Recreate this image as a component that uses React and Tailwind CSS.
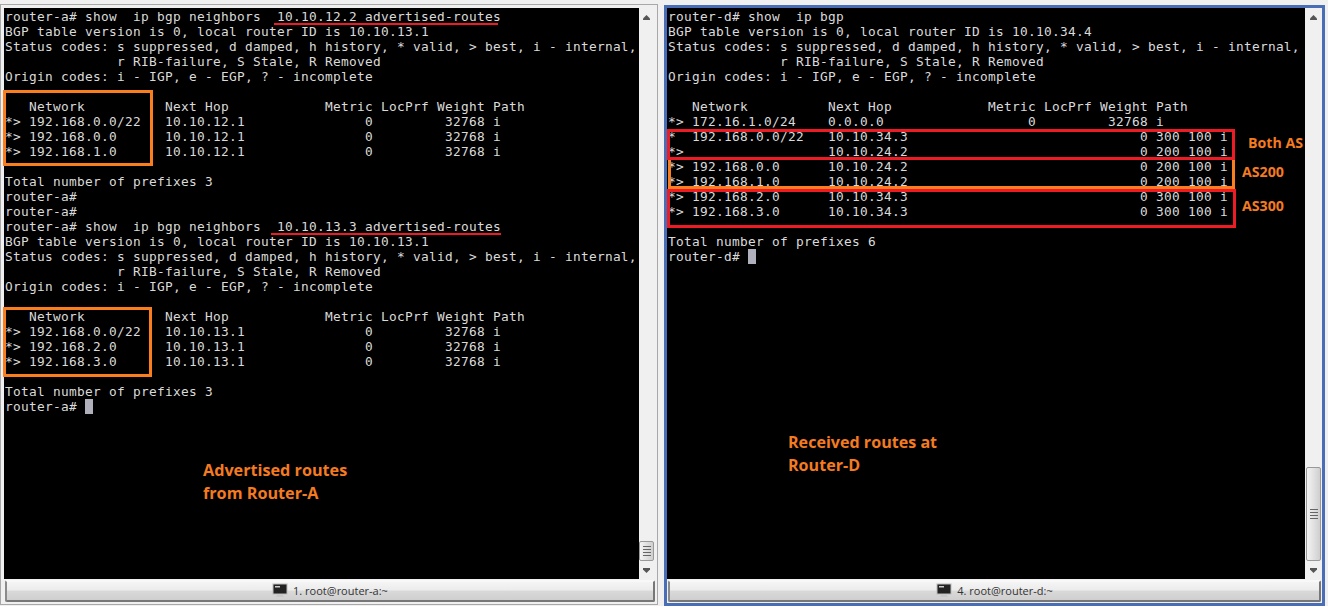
const leftLines = [
  'router-a# show  ip bgp neighbors  10.10.12.2 advertised-routes',
  'BGP table version is 0, local router ID is 10.10.13.1',
  'Status codes: s suppressed, d damped, h history, * valid, > best, i - internal,',
  '              r RIB-failure, S Stale, R Removed',
  'Origin codes: i - IGP, e - EGP, ? - incomplete',
  '',
  '   Network          Next Hop            Metric LocPrf Weight Path',
  '*> 192.168.0.0/22   10.10.12.1               0         32768 i',
  '*> 192.168.0.0      10.10.12.1               0         32768 i',
  '*> 192.168.1.0      10.10.12.1               0         32768 i',
  '',
  'Total number of prefixes 3',
  'router-a#',
  'router-a#',
  'router-a# show  ip bgp neighbors  10.10.13.3 advertised-routes',
  'BGP table version is 0, local router ID is 10.10.13.1',
  'Status codes: s suppressed, d damped, h history, * valid, > best, i - internal,',
  '              r RIB-failure, S Stale, R Removed',
  'Origin codes: i - IGP, e - EGP, ? - incomplete',
  '',
  '   Network          Next Hop            Metric LocPrf Weight Path',
  '*> 192.168.0.0/22   10.10.13.1               0         32768 i',
  '*> 192.168.2.0      10.10.13.1               0         32768 i',
  '*> 192.168.3.0      10.10.13.1               0         32768 i',
  '',
  'Total number of prefixes 3',
]

const rightLines = [
  'router-d# show  ip bgp',
  'BGP table version is 0, local router ID is 10.10.34.4',
  'Status codes: s suppressed, d damped, h history, * valid, > best, i - internal,',
  '              r RIB-failure, S Stale, R Removed',
  'Origin codes: i - IGP, e - EGP, ? - incomplete',
  '',
  '   Network          Next Hop            Metric LocPrf Weight Path',
  '*> 172.16.1.0/24    0.0.0.0                  0         32768 i',
  '*  192.168.0.0/22   10.10.34.3                             0 300 100 i',
  '*>                  10.10.24.2                             0 200 100 i',
  '*> 192.168.0.0      10.10.24.2                             0 200 100 i',
  '*> 192.168.1.0      10.10.24.2                             0 200 100 i',
  '*> 192.168.2.0      10.10.34.3                             0 300 100 i',
  '*> 192.168.3.0      10.10.34.3                             0 300 100 i',
  '',
  'Total number of prefixes 6',
]

function Console({ lines, prompt }) {
  return (
    <pre className="font-['DejaVu_Sans_Mono',monospace] text-[12.800px] tracking-[0.294px] leading-[15px] text-[#dadada] whitespace-pre overflow-hidden">
      {lines.map((line, i) => (
        <div key={i} className="h-[15px]">{line}</div>
      ))}
      <div className="h-[15px] flex">
        {prompt}
        <span className="ml-2 w-2 h-[15px] bg-[#b0b0bc]" />
      </div>
    </pre>
  )
}

function Scrollbar({ thumb, className }) {
  return (
    <div className={`w-[17px] shrink-0 bg-[#f0f0f0] flex flex-col justify-between items-center pt-[7px] pb-1 ${className}`}>
      <svg width="9" height="5" viewBox="0 0 9 5">
        <path d="M4.500 0l3.500 3.500v1.500h-7v-1.500z" fill="#555" />
      </svg>
      <div className="flex flex-col items-center">
        {thumb}
        <svg width="9" height="5" viewBox="0 0 9 5" className="mt-[7px] mb-[2px]">
          <path d="M1 0h7v1.500l-3.500 3.500l-3.500-3.500z" fill="#555" />
        </svg>
      </div>
    </div>
  )
}

function Grip() {
  return (
    <div className="flex flex-col gap-[2px] w-[8px]">
      <div className="h-[1px] bg-[#666]" />
      <div className="h-[1px] bg-[#666]" />
      <div className="h-[1px] bg-[#666]" />
      <div className="h-[1px] bg-[#666]" />
    </div>
  )
}

function TaskButton({ label, className }) {
  return (
    <div className={`h-[22px] mt-[1px] rounded-[2px] border-2 border-t-[#f8f8f8] border-l-[#8a8a8a] border-r-[#777] border-b-[#777] bg-[linear-gradient(#f4f4f4,#ececec_45%,#d9d9d9_50%,#cfcfcf)] flex items-center justify-center gap-[5px] font-['Open_Sans',sans-serif] text-[11px] text-[#333] ${className}`}>
      <svg width="16" height="16" viewBox="0 0 16 16">
        <rect x="1" y="1" width="14" height="10" fill="#222" stroke="#bbb" />
        <rect x="3" y="3" width="5" height="1.500" fill="#ccc" />
        <path d="M5 12h6l1 2h-8z" fill="#c8c8c8" />
      </svg>
      {label}
    </div>
  )
}

function Note({ className, children }) {
  return (
    <div className={`absolute font-['Open_Sans',sans-serif] font-bold text-[#f47b20] ${className}`}>
      {children}
    </div>
  )
}

function Box({ className }) {
  return <div className={`absolute ${className}`} />
}

export default function App() {
  return (
    <div className="w-[1328px] h-[606px] bg-[#f0f0f0] flex overflow-hidden">
      <div className="relative w-[658px] h-[601px] shrink-0 mt-[4px] pl-[3px] pt-[3px] border border-[#a8a8a8] flex flex-col">
        <div className="flex h-[571px]">
          <div className="w-[635px] bg-black pl-[1px] pt-[1px] overflow-hidden">
            <Console lines={leftLines} prompt="router-a#" />
          </div>
          <Scrollbar
            className="pr-[2px]"
            thumb={
              <div className="w-[15px] h-[20px] rounded-[2px] border border-[#999] bg-gradient-to-r from-[#f4f4f4] to-[#cfcfcf] flex items-center justify-center">
                <Grip />
              </div>
            }
          />
        </div>
        <TaskButton label="1. root@router-a:~" className="ml-[1px] mr-[2px]" />

        <Box className="left-[2px] top-[85px] w-[150px] h-[76px] border-[3px] border-[#fa7d1e]" />
        <Box className="left-[2px] top-[302px] w-[149px] h-[70px] border-[3px] border-[#fa7d1e]" />
        <Box className="left-[273px] top-[18px] w-[224px] h-[2px] bg-[#ed1c24]" />
        <Box className="left-[270px] top-[228px] w-[230px] h-[2px] bg-[#ed1c24]" />
        <Note className="left-[202px] top-[454px] text-[16.200px] leading-[23px]">
          Advertised routes<br />from Router-A
        </Note>
      </div>

      <div className="relative w-[661px] h-[601px] shrink-0 mt-[5px] ml-[6px] border-[3px] border-[#4a6eb5] flex flex-col">
        <div className="flex h-[571px]">
          <div className="flex-1 bg-black pl-[1px] pt-[1px] overflow-hidden">
            <Console lines={rightLines} prompt="router-d#" />
          </div>
          <Scrollbar
            thumb={
              <div className="w-[15px] h-[94px] rounded-[2px] border border-[#999] bg-gradient-to-r from-[#f4f4f4] to-[#cfcfcf] flex items-center justify-center">
                <Grip />
              </div>
            }
          />
        </div>
        <TaskButton label="4. root@router-d:~" className="mx-[1px]" />

        <Box className="left-0 top-[121px] w-[568px] h-[31px] border-[3px] border-[#ed1c24]" />
        <Box className="left-[1px] top-[152px] w-[567px] h-[29px] border-x-[3px] border-b-[3px] border-[#fa7d1e]" />
        <Box className="left-0 top-[181px] w-[569px] h-[39px] border-[3px] border-[#ed1c24]" />
        <Note className="left-[581px] top-[126px] text-[14.200px] leading-[18px]">Both AS</Note>
        <Note className="left-[575px] top-[155px] text-[14.200px] leading-[18px]">AS200</Note>
        <Note className="left-[575px] top-[189px] text-[14.200px] leading-[18px]">AS300</Note>
        <Note className="left-[121px] top-[423px] text-[16.100px] leading-[23px]">
          Received routes at<br />Router-D
        </Note>
      </div>
    </div>
  )
}
